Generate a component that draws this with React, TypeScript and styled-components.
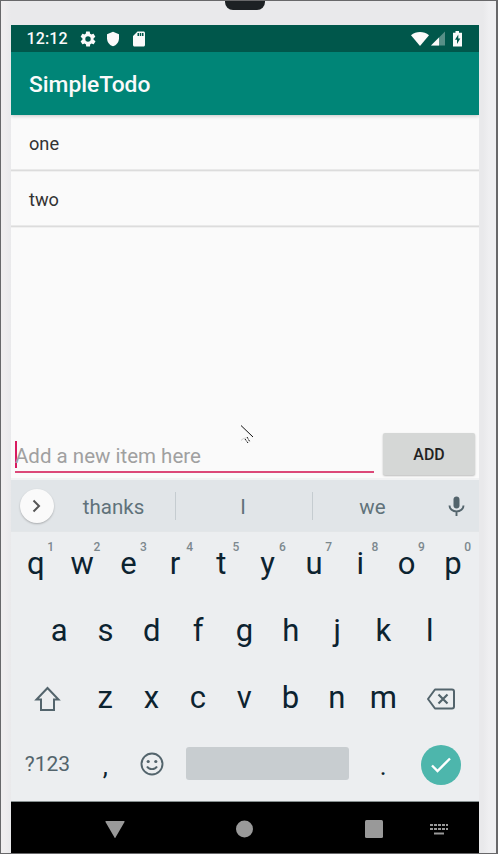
import React from 'react';
import styled, { createGlobalStyle } from 'styled-components';

const Global = createGlobalStyle`
  * { box-sizing: border-box; }
  body { margin: 0; font-family: Roboto, sans-serif; }
`;

const Device = styled.div`
  position: relative;
  width: 498px;
  height: 854px;
  padding: 24px 0 0 10px;
  overflow: hidden;
  background: linear-gradient(90deg, #f0eeef 0 3px, #e9e9eb 10px, #e9e9eb 482px, #efeff1 488px, #efeff1 100%);
  border: 1px solid #68686a;
  border-right-width: 2px;
`;
const Speaker = styled.div`
  position: absolute;
  top: 0;
  left: 224px;
  width: 40px;
  height: 9px;
  background: #1d2124;
  border-radius: 0 0 8px 8px;
`;
const Screen = styled.div`
  width: 468px;
  height: 828px;
  display: flex;
  flex-direction: column;
  background: #fafafa;
`;
const StatusBar = styled.div`
  height: 27px;
  flex: none;
  display: flex;
  align-items: center;
  justify-content: space-between;
  padding: 0 16px 0 15.5px;
  background: #00574b;
  color: #fafafa;
`;
const StatusGroup = styled.div<{ $gap: number }>`
  display: flex;
  align-items: center;
  gap: ${(p) => p.$gap}px;
  svg { display: block; }
`;
const Clock = styled.span`
  width: 41px;
  margin-right: 2.5px;
  font-size: 16px;
  font-weight: 500;
  line-height: 27px;
  letter-spacing: 0.1px;
`;
const AppBar = styled.header`
  position: relative;
  height: 63px;
  flex: none;
  display: flex;
  align-items: center;
  padding: 2px 18px 0;
  background: #008577;
  color: #fafafa;
  font-size: 22.8px;
  font-weight: 500;
  box-shadow: 0 1px 4px rgba(0, 0, 0, 0.22);
  clip-path: inset(0 0 -5px 0);
`;
const List = styled.div`
  flex: 1;
`;
const Item = styled.div`
  height: 56px;
  padding-left: 18px;
  line-height: 57px;
  font-size: 18.2px;
  color: #333;
  background: linear-gradient(#e9e9e9 0 1px, #dcdcdc 1px 2px, #f0f0f0 2px) left bottom / 100% 3px no-repeat;

  &:first-child {
    height: 57px;
  }
  & + & {
    line-height: 55px;
  }
`;
const Entry = styled.div`
  height: 49px;
  flex: none;
  display: flex;
  align-items: flex-start;
  padding: 2px 4px 0;
  border-bottom: 2px solid #f1f2f3;
`;
const Field = styled.div`
  width: 359px;
  height: 38px;
  margin-top: 2px;
  padding-top: 5px;
  display: flex;
  align-items: center;
  border-bottom: 2px solid #dc4878;
  font-size: 20.5px;
  color: #a0a0a0;
`;
const Caret = styled.span`
  width: 2px;
  height: 27px;
  margin: 0 -2px 3px 0;
  background: #d81b60;
`;
const AddButton = styled.button`
  width: 92px;
  height: 42px;
  margin: 0 0 0 9px;
  padding: 0;
  border: 0;
  border-radius: 2px;
  background: #d5d7d6;
  color: #222;
  font: 500 15.9px Roboto, sans-serif;
  box-shadow: 0 1px 2px rgba(0, 0, 0, 0.25);
`;
const Suggestions = styled.div`
  height: 51px;
  flex: none;
  display: flex;
  align-items: center;
  background: #e1e5e8;
  color: #60727a;
`;
const Expand = styled.div`
  width: 34px;
  height: 34px;
  margin-left: 9px;
  display: grid;
  place-items: center;
  border-radius: 50%;
  background: #fafafa;
  box-shadow: 0 1px 2px rgba(0, 0, 0, 0.25);
`;
const Word = styled.div<{ $width: number; $last?: boolean }>`
  width: ${(p) => p.$width}px;
  height: 28px;
  padding-right: 2px;
  line-height: 30px;
  text-align: center;
  font-size: 20.5px;
  border-right: ${(p) => (p.$last ? '0' : '1px solid #c5ccd0')};
`;
const Keyboard = styled.div`
  height: 270px;
  flex: none;
  background: #eceef0;
  border-top: 1px solid #e3e6e8;
  color: #0c2330;
`;
const KeyRow = styled.div<{ $top: number; $height: number; $inset: number }>`
  height: ${(p) => p.$height}px;
  padding: ${(p) => p.$top}px ${(p) => p.$inset}px 0;
  display: flex;
`;
const Key = styled.div`
  position: relative;
  width: 46.35px;
  flex: none;
  text-align: center;
  font-size: 31px;
  line-height: 36px;
`;
const Hint = styled.span`
  position: absolute;
  top: -6px;
  right: 5px;
  font-size: 12px;
  line-height: 14px;
  font-weight: 500;
  color: #7c888e;
`;
const WideKey = styled.div<{ $width: number }>`
  width: ${(p) => p.$width}px;
  height: 36px;
  flex: none;
  display: grid;
  place-items: center;
  color: #53646c;
  font-size: 21px;
`;
const SpaceBar = styled.div`
  width: 163px;
  height: 33px;
  margin: 1px 11px 0 11.2px;
  border-radius: 3px;
  background: #c8cdd0;
`;
const Punctuation = styled(Key)`
  font-size: 26px;
  line-height: 41px;
`;
const Enter = styled.div`
  width: 40px;
  height: 40px;
  margin: -1px 0 0 15px;
  display: grid;
  place-items: center;
  border-radius: 50%;
  background: #4db6ac;
`;
const NavBar = styled.nav`
  height: 52px;
  flex: none;
  display: grid;
  grid-template-columns: 39px 130px 129px 130px 40px;
  align-items: center;
  justify-items: center;
  padding-top: 3px;
  background: #000;
  border-top: 1px solid #879090;
`;
const ImeSwitch = styled.svg`
  justify-self: start;
  margin-left: -10px;
`;
const Pointer = styled.svg`
  position: absolute;
  left: 239px;
  top: 424px;
`;

const topRow = 'qwertyuiop'.split('');
const homeRow = 'asdfghjkl'.split('');
const bottomRow = 'zxcvbnm'.split('');

export default function App() {
  return (
    <Device>
      <Global />
      <Speaker />
      <Screen>
        <StatusBar>
          <StatusGroup $gap={8.5}>
            <Clock>12:12</Clock>
            <svg width="18" height="18" viewBox="0 0 24 24" fill="currentColor">
              <path d="M19.4 13c0-.3.1-.6.1-1s0-.7-.1-1l2.1-1.6c.2-.2.3-.4.1-.7l-2-3.4c-.1-.2-.4-.3-.6-.2l-2.5 1c-.5-.4-1.1-.7-1.7-1l-.4-2.6c0-.3-.2-.5-.5-.5h-4c-.2 0-.5.2-.5.4l-.4 2.7c-.6.2-1.1.6-1.7 1L5 5.1c-.3-.1-.5 0-.7.2l-2 3.4c-.1.2 0 .5.2.7L4.6 11c-.1.3-.1.7-.1 1s0 .7.1 1l-2.1 1.7c-.2.1-.3.4-.2.6l2 3.5c.2.2.4.3.7.2l2.5-1c.5.4 1 .7 1.7 1l.4 2.6c0 .2.3.4.5.4h4c.3 0 .5-.2.5-.4l.4-2.7c.6-.2 1.2-.5 1.7-.9l2.5 1c.2.1.5 0 .6-.2l2-3.5c.2-.2.1-.5-.1-.6zM12 15.6a3.6 3.6 0 1 1 0-7.2 3.6 3.6 0 0 1 0 7.2z" />
            </svg>
            <svg width="16" height="16" viewBox="0 0 24 24" fill="currentColor">
              <path d="M12 1 3 5v6c0 5.5 3.8 10.7 9 12 5.2-1.3 9-6.5 9-12V5z" />
            </svg>
            <svg width="18" height="18" viewBox="0 0 24 24" fill="currentColor">
              <path d="M18 2h-8L4 8v12c0 1.1.9 2 2 2h12c1.1 0 2-.9 2-2V4c0-1.1-.9-2-2-2zm-6 6h-2V4h2zm3 0h-2V4h2zm3 0h-2V4h2z" />
            </svg>
          </StatusGroup>
          <StatusGroup $gap={2}>
            <svg width="18" height="14" viewBox="0 0 18 14" fill="currentColor">
              <path d="M9 14 0 3.2C5-1 13-1 18 3.2z" />
            </svg>
            <svg width="14" height="15" viewBox="0 0 14 15" fill="currentColor">
              <path opacity=".35" d="M0 14.5 14 .5v14z" />
              <path d="M0 14.5 8 6.5v8z" />
            </svg>
            <svg width="16" height="16" viewBox="0 0 16 16">
              <path fill="currentColor" d="M6 1.8h2.5V0H12v1.8h3v13.7H6z" />
              <path fill="#00574b" d="M11.3 3.5 8 8.800h2v4.200l3.300-5.500h-2z" />
            </svg>
          </StatusGroup>
        </StatusBar>
        <AppBar>SimpleTodo</AppBar>
        <List>
          <Item>one</Item>
          <Item>two</Item>
        </List>
        <Entry>
          <Field><Caret />Add a new item here</Field>
          <AddButton>ADD</AddButton>
        </Entry>
        <Suggestions>
          <Expand>
            <svg width="14" height="14" viewBox="0 0 14 14" fill="none" stroke="#555" strokeWidth="2">
              <path d="m3.5 1.5 5.5 5.5-5.5 5.5" />
            </svg>
          </Expand>
          <Word $width={122}>thanks</Word>
          <Word $width={137}>I</Word>
          <Word $width={121} $last>we</Word>
          <svg width="45" height="24" viewBox="0 0 45 24">
            <path fill="#53646c" d="M22.5 14.5c1.8 0 3-1.3 3-3v-6c0-1.7-1.2-3-3-3s-3 1.3-3 3v6c0 1.7 1.2 3 3 3z" />
            <path fill="none" stroke="#53646c" strokeWidth="1.9" d="M15.5 11.5c0 3.5 3.2 6 7 6s7-2.5 7-6M22.5 17.5V22" />
          </svg>
        </Suggestions>
        <Keyboard>
          <KeyRow $top={14} $height={66} $inset={1.7}>
            {topRow.map((k, i) => <Key key={k}>{k}<Hint>{(i + 1) % 10}</Hint></Key>)}
          </KeyRow>
          <KeyRow $top={15} $height={67} $inset={24.9}>
            {homeRow.map((k) => <Key key={k}>{k}</Key>)}
          </KeyRow>
          <KeyRow $top={15} $height={67} $inset={1.5}>
            <WideKey $width={69.5}>
              <svg width="28" height="28" viewBox="0 0 28 28" fill="none" stroke="#53646c" strokeWidth="2">
                <path d="M14.500 4 3.500 15.500H8V26h13V15.500h4.500z" />
              </svg>
            </WideKey>
            {bottomRow.map((k) => <Key key={k}>{k}</Key>)}
            <WideKey $width={69.5}>
              <svg width="30" height="26" viewBox="0 0 30 26" fill="none" stroke="#53646c" strokeWidth="2">
                <path strokeLinejoin="round" d="M9 4.500h17q2 0 2 2v15q0 2-2 2H9L2 14z" />
                <path d="m12.500 9.500 9 9m0-9-9 9" strokeWidth="2.2" />
              </svg>
            </WideKey>
          </KeyRow>
          <KeyRow $top={14} $height={69} $inset={1.7}>
            <WideKey $width={69.5}>?123</WideKey>
            <Punctuation>,</Punctuation>
            <WideKey $width={46.35}>
              <svg width="24" height="24" viewBox="0 0 24 24" fill="none" stroke="#53646c" strokeWidth="1.9">
                <circle cx="12" cy="12" r="10.5" />
                <path d="M7 14.5c2 3.500 8 3.500 10 0" />
                <g fill="#53646c" stroke="none">
                  <circle cx="8.2" cy="9.5" r="1.6" />
                  <circle cx="15.8" cy="9.5" r="1.6" />
                </g>
              </svg>
            </WideKey>
            <SpaceBar />
            <Punctuation>.</Punctuation>
            <Enter>
              <svg width="22" height="18" viewBox="0 0 22 18" fill="none" stroke="#fff" strokeWidth="2.4">
                <path d="m2 9.5 5.5 5.5L20 2.5" />
              </svg>
            </Enter>
          </KeyRow>
        </Keyboard>
        <NavBar>
          <span />
          <svg width="20" height="18" viewBox="0 0 20 18"><path fill="#999" d="M1 1h18q1 0 .5 1L10.5 17.5q-.5 1-1 0L.5 2q-.5-1 .5-1z" /></svg>
          <svg width="18" height="18" viewBox="0 0 18 18"><circle cx="8.5" cy="9" r="8.5" fill="#999" /></svg>
          <svg width="18" height="18" viewBox="0 0 18 18"><rect width="18" height="18" rx="1.5" fill="#999" /></svg>
          <ImeSwitch width="20" height="14" viewBox="0 0 20 14" fill="none" stroke="#999" strokeWidth="2">
            <path strokeDasharray="3 1" d="M1 3h18M1 7h18" />
            <path d="M5 11.5h10" />
          </ImeSwitch>
        </NavBar>
      </Screen>
      <Pointer width="16" height="20" viewBox="0 0 16 20" fill="none" stroke="#111">
        <path d="m1 .5 12 11.5" />
        <path stroke="#ccc" d="M1 15.5q2-2.5 5-2.5" />
        <path strokeDasharray="2 1" d="m5 14 3 4M7 12l3 5" />
      </Pointer>
    </Device>
  );
}
